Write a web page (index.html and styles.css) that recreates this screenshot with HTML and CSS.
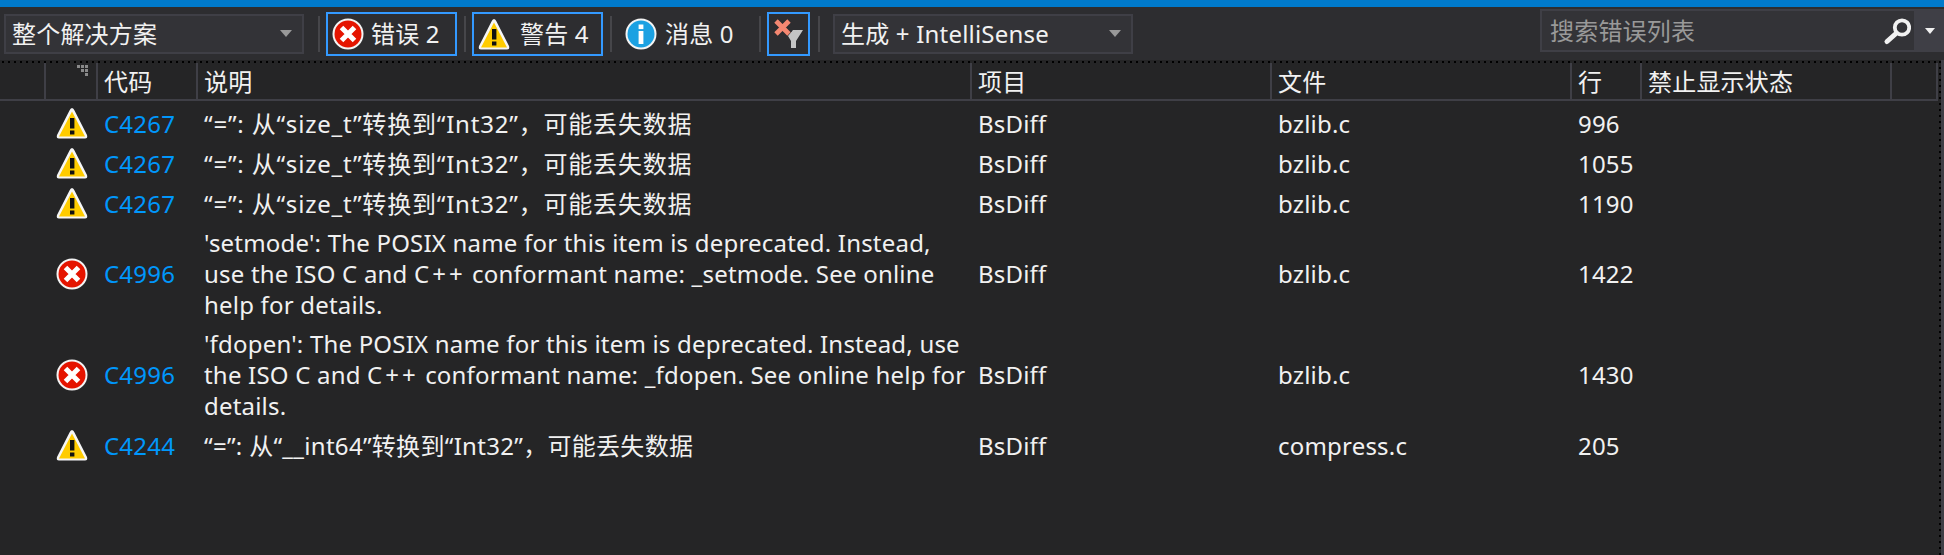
FILE: index.html
```html
<!DOCTYPE html>
<html lang="zh-CN">
<head>
<meta charset="UTF-8">
<title>错误列表</title>
<link rel="stylesheet" href="styles.css">
</head>
<body>

<svg class="defs" width="0" height="0">
  <symbol id="ico-err" viewBox="0 0 32 32">
    <circle cx="16" cy="16" r="15.5" fill="#f4f4f4"/>
    <circle cx="16" cy="16" r="13.5" fill="#e51400"/>
    <path d="M9.5 9.5 L22.5 22.5 M22.5 9.5 L9.5 22.5" stroke="#fff" stroke-width="5" fill="none"/>
  </symbol>
  <symbol id="ico-warn" viewBox="0 0 32 32">
    <path d="M16 1 Q17.5 1 18.5 3.5 L31 28 Q32 31.5 29 31.5 L3 31.5 Q0 31.5 1 28 L13.5 3.5 Q14.5 1 16 1 Z" fill="#f6f6f6"/>
    <path d="M16 4.5 L29 29.5 L3 29.5 Z" fill="#ffcc00"/>
    <rect x="14" y="11" width="4.4" height="10.5" fill="#111"/>
    <rect x="14" y="23.5" width="4.4" height="4" fill="#111"/>
  </symbol>
</svg>

<div class="topline"></div>

<div class="toolbar">
  <div class="combo combo-scope"><span>整个解决方案</span><i class="arrow"></i></div>
  <i class="sep"></i>
  <div class="toggle toggle-err"><svg class="ico"><use href="#ico-err"/></svg><span>错误 2</span></div>
  <i class="sep"></i>
  <div class="toggle toggle-warn"><svg class="ico"><use href="#ico-warn"/></svg><span>警告 4</span></div>
  <i class="sep"></i>
  <div class="toggle toggle-info">
    <svg class="ico" viewBox="0 0 32 32">
      <circle cx="16" cy="16" r="15.5" fill="#f4f4f4"/>
      <circle cx="16" cy="16" r="13.5" fill="#1ba1e2"/>
      <rect x="13.6" y="6.5" width="4.8" height="4.6" fill="#fff"/>
      <rect x="13.6" y="13" width="4.8" height="13" fill="#fff"/>
    </svg>
    <span>消息 0</span>
  </div>
  <i class="sep"></i>
  <div class="toggle toggle-filter">
    <svg width="39" height="40" viewBox="0 0 39 40">
      <path d="M19 22 L24 16 H34 L27 27 V34 H22 V27 Z" fill="#c4c4c4"/>
      <path d="M7 7 L20 20 M20 7 L7 20" stroke="#2d2d30" stroke-width="8" fill="none"/>
      <path d="M7 7 L20 20 M20 7 L7 20" stroke="#f48771" stroke-width="4.8" fill="none"/>
    </svg>
  </div>
  <i class="sep sep-last"></i>
  <div class="combo combo-build"><span>生成 + IntelliSense</span><i class="arrow"></i></div>
  <div class="search">
    <div class="search-box">
      <span>搜索错误列表</span>
      <svg width="28" height="32" viewBox="0 0 28 32">
        <circle cx="19" cy="12.5" r="7.2" fill="none" stroke="#f1f1f1" stroke-width="3.8"/>
        <path d="M13 18.5 L4 26.5" stroke="#f1f1f1" stroke-width="5" stroke-linecap="round"/>
      </svg>
    </div>
    <div class="search-drop"><i class="arrow arrow-white"></i></div>
  </div>
</div>

<div class="list">
  <div class="row head">
    <div class="cell"></div>
    <div class="cell cell-sort"><svg width="11" height="11" viewBox="0 0 11 11"><path d="M0 0h3v3H0zM4 0h3v3H4zM8 0h3v3H8zM4 4h3v3H4zM8 4h3v3H8zM8 8h3v3H8z" fill="#8a8a8a"/></svg></div>
    <div class="cell">代码</div>
    <div class="cell">说明</div>
    <div class="cell">项目</div>
    <div class="cell">文件</div>
    <div class="cell">行</div>
    <div class="cell">禁止显示状态</div>
    <div class="cell"></div>
  </div>

  <div class="row">
    <div class="cell"></div>
    <div class="cell cell-icon"><svg class="ico"><use href="#ico-warn"/></svg></div>
    <div class="cell code">C4267</div>
    <div class="cell zh">“=”: 从“size_t”转换到“Int32”，可能丢失数据</div>
    <div class="cell">BsDiff</div>
    <div class="cell">bzlib.c</div>
    <div class="cell">996</div>
  </div>
  <div class="row">
    <div class="cell"></div>
    <div class="cell cell-icon"><svg class="ico"><use href="#ico-warn"/></svg></div>
    <div class="cell code">C4267</div>
    <div class="cell zh">“=”: 从“size_t”转换到“Int32”，可能丢失数据</div>
    <div class="cell">BsDiff</div>
    <div class="cell">bzlib.c</div>
    <div class="cell">1055</div>
  </div>
  <div class="row">
    <div class="cell"></div>
    <div class="cell cell-icon"><svg class="ico"><use href="#ico-warn"/></svg></div>
    <div class="cell code">C4267</div>
    <div class="cell zh">“=”: 从“size_t”转换到“Int32”，可能丢失数据</div>
    <div class="cell">BsDiff</div>
    <div class="cell">bzlib.c</div>
    <div class="cell">1190</div>
  </div>
  <div class="row tall">
    <div class="cell"></div>
    <div class="cell cell-icon"><svg class="ico"><use href="#ico-err"/></svg></div>
    <div class="cell code">C4996</div>
    <div class="cell">'setmode': The POSIX name for this item is deprecated. Instead,<br>use the ISO C and <span class="cpp">C++</span> conformant name: _setmode. See online<br>help for details.</div>
    <div class="cell">BsDiff</div>
    <div class="cell">bzlib.c</div>
    <div class="cell">1422</div>
  </div>
  <div class="row tall">
    <div class="cell"></div>
    <div class="cell cell-icon"><svg class="ico"><use href="#ico-err"/></svg></div>
    <div class="cell code">C4996</div>
    <div class="cell">'fdopen': The POSIX name for this item is deprecated. Instead, use<br>the ISO C and <span class="cpp">C++</span> conformant name: _fdopen. See online help for<br>details.</div>
    <div class="cell">BsDiff</div>
    <div class="cell">bzlib.c</div>
    <div class="cell">1430</div>
  </div>
  <div class="row">
    <div class="cell"></div>
    <div class="cell cell-icon"><svg class="ico"><use href="#ico-warn"/></svg></div>
    <div class="cell code">C4244</div>
    <div class="cell zh-tight">“=”: 从“__int64”转换到“Int32”，可能丢失数据</div>
    <div class="cell">BsDiff</div>
    <div class="cell">compress.c</div>
    <div class="cell">205</div>
  </div>
</div>

</body>
</html>
```

FILE: styles.css
```css
html, body { margin: 0; height: 100%; }
body {
  display: flex;
  flex-direction: column;
  background: #252526;
  color: #f1f1f1;
  font-family: "Noto Sans", "Noto Sans CJK SC", sans-serif;
  font-size: 24px;
  letter-spacing: 0.2px;
  line-height: 31px;
  overflow: hidden;
}
.defs { display: block; height: 0; flex: none; }
.topline { height: 7px; flex: none; background: #007acc; }

.toolbar {
  display: flex;
  flex: none;
  align-items: center;
  height: 53px;
  background: #2d2d30;
  padding-left: 4px;
}
.combo {
  display: flex;
  align-items: center;
  justify-content: space-between;
  box-sizing: border-box;
  width: 300px;
  height: 40px;
  padding: 0 10px 0 6px;
  background: #333337;
  border: 2px solid #3f3f46;
}
.arrow {
  width: 0;
  height: 0;
  border: 6px solid transparent;
  border-top: 7px solid #999;
  border-bottom: 0;
}
.arrow-white { border-top-color: #f1f1f1; border-left-width: 5.5px; border-right-width: 5.5px; border-top-width: 6px; }
.sep { width: 2px; height: 36px; margin: 0 6px 0 7px; background: #46464a; }
.sep:first-of-type { margin-left: 14px; }
.sep-last { margin: 0 13px 0 8px; }
.toggle {
  display: flex;
  align-items: center;
  box-sizing: border-box;
  height: 44px;
  border: 2px solid transparent;
}
.toggle-err, .toggle-warn, .toggle-filter { border-color: #3399ff; }
.toggle-err, .toggle-warn { width: 131px; padding-left: 4px; gap: 7px; }
.toggle-warn { gap: 10px; }
.toggle-info { width: 134px; padding-left: 5px; gap: 8px; }
.toggle-filter { width: 43px; }
.ico { width: 32px; height: 32px; flex: none; }

.search { display: flex; margin-left: auto; align-self: flex-start; margin-top: 2px; }
.search-box {
  display: flex;
  align-items: center;
  justify-content: space-between;
  box-sizing: border-box;
  width: 376px;
  height: 43px;
  padding: 0 3px 0 8px;
  background: #333337;
  border: 2px solid #3f3f46;
  color: #999;
}
.search-drop {
  display: flex;
  align-items: center;
  justify-content: center;
  width: 28px;
  background: #3f3f46;
}

/* the dotted grip lines along the top and right of the list */
.list {
  flex: 1;
  border-right: 3px solid #3f3f46;
  background-image:
    linear-gradient(to right, #000 2px, transparent 2px),
    linear-gradient(to bottom, #000 2px, transparent 2px);
  background-size: 6px 2px, 2px 6px;
  background-position: 2px 1px, right 0 top 1px;
  background-repeat: repeat-x, repeat-y;
}
.row {
  display: grid;
  grid-template-columns: 46px 52px 100px 774px 300px 300px 70px 250px 46px;
  min-height: 40px;
  align-items: center;
  white-space: nowrap;
}
.cell { padding-left: 6px; }
.tall { min-height: 101px; }
.head {
  height: 36px;
  min-height: 36px;
  margin: 3px 3px 2px 0;
  border-bottom: 2px solid #3f3f46;
}
.head .cell {
  height: 100%;
  border-right: 2px solid #3f3f46;
  box-sizing: border-box;
  line-height: 38px;
}
.cell-sort { display: flex; justify-content: flex-end; padding: 2px 8px 0 0; }
.cell-icon { padding-left: 10px; display: flex; }
.code { color: #0097fb; }
.zh { letter-spacing: 0.8px; }
.zh-tight { letter-spacing: 0.3px; }
.cpp { letter-spacing: 3px; }
```
